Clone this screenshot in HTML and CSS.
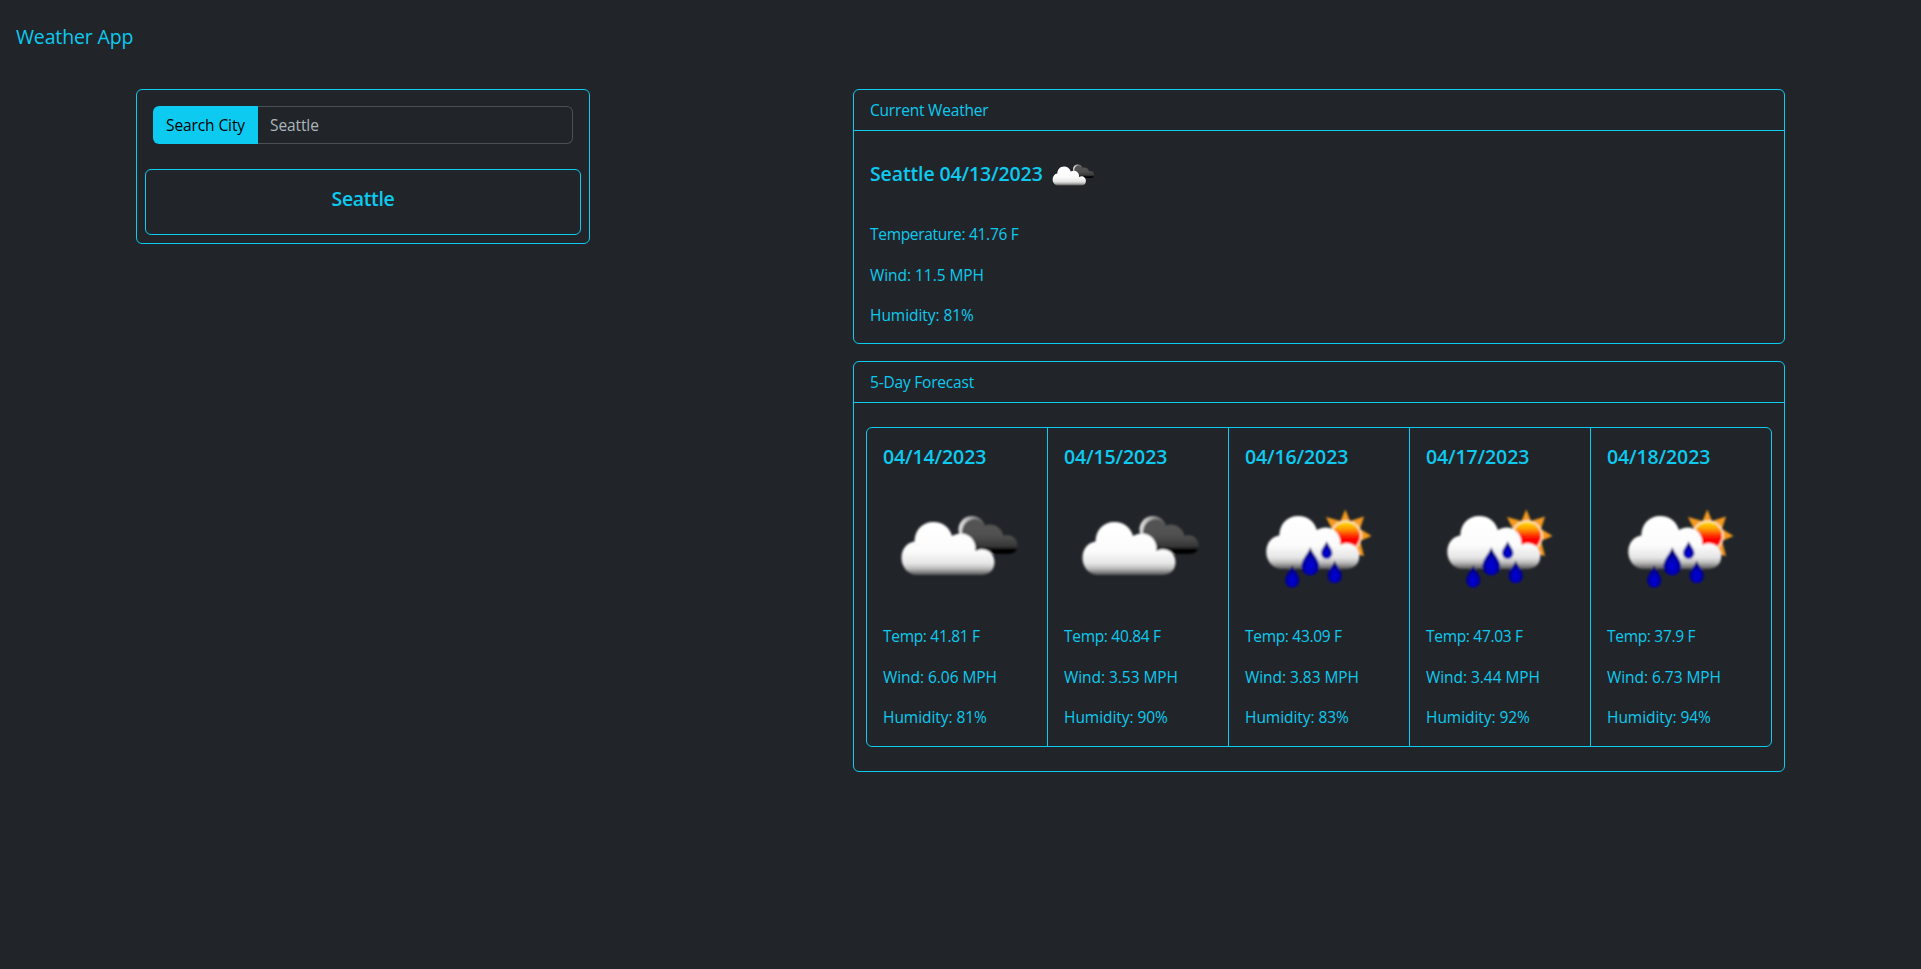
FILE: index.html
```html
<!DOCTYPE html>
<html lang="en">
<head>
<meta charset="utf-8">
<title>Weather App</title>
<link rel="stylesheet" href="styles.css">
</head>
<body>
<svg class="defs" width="0" height="0" aria-hidden="true">
  <defs>
    <linearGradient id="white" gradientUnits="userSpaceOnUse" x1="0" y1="32" x2="0" y2="85">
      <stop offset="0" stop-color="#fff"/><stop offset=".55" stop-color="#fcfcfc"/><stop offset=".78" stop-color="#e6e6e6"/><stop offset=".88" stop-color="#bbb"/><stop offset="1" stop-color="#555"/>
    </linearGradient>
    <linearGradient id="dark" gradientUnits="userSpaceOnUse" x1="0" y1="28" x2="0" y2="64">
      <stop offset="0" stop-color="#555"/><stop offset=".5" stop-color="#505050"/><stop offset=".78" stop-color="#383838"/><stop offset=".9" stop-color="#050505"/><stop offset="1" stop-color="#000"/>
    </linearGradient>
    <linearGradient id="rim" x1="0" y1="0" x2="1" y2=".25">
      <stop offset="0" stop-color="#fff"/><stop offset=".5" stop-color="#999"/><stop offset="1" stop-color="#555"/>
    </linearGradient>
    <linearGradient id="sun" x1="0" y1="0" x2="0" y2="1">
      <stop offset="0" stop-color="#ffe000"/><stop offset=".25" stop-color="#ff9d00"/><stop offset=".5" stop-color="#ff2a00"/><stop offset=".62" stop-color="#f00"/><stop offset="1" stop-color="#f00"/>
    </linearGradient>
    <radialGradient id="drop" cx=".5" cy=".68" r=".6">
      <stop offset="0" stop-color="#0000e0"/><stop offset=".5" stop-color="#0000b0"/><stop offset="1" stop-color="#00005c"/>
    </radialGradient>
    <filter id="soft" x="-10%" y="-10%" width="120%" height="120%"><feGaussianBlur stdDeviation=".8"/></filter>
    <path id="raindrop" d="M0 0C1 5 9 12 9 19.500A9 9 0 0 1-9 19.500C-9 12-1 5 0 0Z"/>
    <symbol id="clouds" viewBox="-2 0 148 110">
      <g filter="url(#soft)">
        <circle cx="87" cy="39.500" r="13.500" fill="url(#rim)"/>
        <path fill="url(#dark)" d="M77 62V43C77 34 83 29 90 29C94 29 97 32 99 36C107 32 117 37 118.500 46C126 43 132.500 49 132.500 55C132.500 61 129 64 123 64H80Z"/>
        <path fill="url(#white)" d="M32 85C23 85 16.500 77 16.500 68C16.500 59 22 52.500 29.500 51.500C30 40 37 32 48.500 32C58 32 65 38 67 46C78 39 92 47 90.500 61C99 56 109.500 62 109.500 72C109.500 80 104 85 96 85Z"/>
      </g>
    </symbol>
    <symbol id="rain" viewBox="25 10 148 110">
      <g filter="url(#soft)">
        <path fill="#f59a1b" d="M125.300 29.500L130 41L144 36.500L140 49L151.500 56L140 61L144 76L126 72L112 61V49L106 37L120.500 41Z"/>
        <circle cx="126" cy="56" r="15.800" fill="#ffe7c2"/>
        <circle cx="126" cy="56" r="14" fill="url(#sun)"/>
        <path fill="url(#white)" transform="translate(29.800 4)" d="M32 85C23 85 16.500 77 16.500 68C16.500 59 22 52.500 29.500 51.500C30 40 37 32 48.500 32C58 32 65 38 67 46C78 39 92 47 90.500 61C99 56 109.500 62 109.500 72C109.500 80 104 85 96 85Z"/>
        <g fill="url(#drop)">
          <use href="#raindrop" transform="translate(90.300 67)"/>
          <use href="#raindrop" transform="translate(72.200 85) scale(.8)"/>
          <use href="#raindrop" transform="translate(106.700 61) scale(.63)"/>
          <use href="#raindrop" transform="translate(114.700 80.500) scale(.8)"/>
        </g>
      </g>
    </symbol>
  </defs>
</svg>
<header class="navbar">Weather App</header>
<main class="layout">
  <section class="panel search">
    <div class="input-group">
      <button class="search-button" type="button">Search City</button>
      <div class="search-input">Seattle</div>
    </div>
    <div class="history"><h5 class="title city">Seattle</h5></div>
  </section>
  <div class="results">
    <section class="panel">
      <div class="panel-header">Current Weather</div>
      <div class="current">
        <div class="current-heading">
          <h5 class="title">Seattle 04/13/2023</h5>
          <svg class="icon-small"><use href="#clouds"/></svg>
        </div>
        <div class="stats">
          <p class="temp">Temperature: 41.76 F</p>
          <p>Wind: 11.5 MPH</p>
          <p>Humidity: 81%</p>
        </div>
      </div>
    </section>
    <section class="panel">
      <div class="panel-header">5-Day Forecast</div>
      <div class="forecast">
        <article class="day"><h5 class="title">04/14/2023</h5><svg class="icon"><use href="#clouds"/></svg>
          <div class="stats"><p class="temp">Temp: 41.81 F</p><p>Wind: 6.06 MPH</p><p>Humidity: 81%</p></div></article>
        <article class="day"><h5 class="title">04/15/2023</h5><svg class="icon"><use href="#clouds"/></svg>
          <div class="stats"><p class="temp">Temp: 40.84 F</p><p>Wind: 3.53 MPH</p><p>Humidity: 90%</p></div></article>
        <article class="day"><h5 class="title">04/16/2023</h5><svg class="icon"><use href="#rain"/></svg>
          <div class="stats"><p class="temp">Temp: 43.09 F</p><p>Wind: 3.83 MPH</p><p>Humidity: 83%</p></div></article>
        <article class="day"><h5 class="title">04/17/2023</h5><svg class="icon"><use href="#rain"/></svg>
          <div class="stats"><p class="temp">Temp: 47.03 F</p><p>Wind: 3.44 MPH</p><p>Humidity: 92%</p></div></article>
        <article class="day"><h5 class="title">04/18/2023</h5><svg class="icon"><use href="#rain"/></svg>
          <div class="stats"><p class="temp">Temp: 37.9 F</p><p>Wind: 6.73 MPH</p><p>Humidity: 94%</p></div></article>
      </div>
    </section>
  </div>
</main>
</body>
</html>
```

FILE: styles.css
```css
* { box-sizing: border-box; }

body {
  margin: 0;
  min-height: 100vh;
  background: #212529;
  color: #0dcaf0;
  font: 400 15.5px/24px "Open Sans", "Noto Sans", sans-serif;
  letter-spacing: -0.2px;
}

h5, p { margin: 0; }
.defs { display: block; height: 0; }

.navbar {
  padding: 22px 16px 37px;
  font-size: 19.5px;
  line-height: 30px;
  letter-spacing: -0.15px;
}

.layout {
  display: flex;
  align-items: flex-start;
  padding: 0 136px;
}

.panel {
  border: 1px solid #0dcaf0;
  border-radius: 6px;
}

.search {
  width: 454px;
  height: 155px;
  margin-right: 263px;
  padding: 16px 8px 8px;
}

.input-group {
  display: flex;
  height: 38px;
  margin: 0 8px 25px;
}

.search-button {
  width: 105px;
  padding: 0;
  border: 0;
  border-radius: 6px 0 0 6px;
  background: #0dcaf0;
  color: #000;
  font: inherit;
  letter-spacing: -0.1px;
}

.search-input {
  flex: 1;
  padding: 6px 12px;
  border: 1px solid #495057;
  border-left: 0;
  border-radius: 0 6px 6px 0;
  color: #adb5bd;
  letter-spacing: -0.1px;
}

.history {
  height: 66px;
  padding-top: 17px;
  border: 1px solid #0dcaf0;
  border-radius: 6px;
  text-align: center;
}

.title {
  font-size: 19.5px;
  font-weight: 600;
  line-height: 24px;
  letter-spacing: -0.12px;
  white-space: nowrap;
}

.city { letter-spacing: -0.35px; }

.results {
  display: flex;
  flex-direction: column;
  gap: 17px;
  width: 932px;
}

.panel-header {
  height: 41px;
  padding: 8px 16px;
  border-bottom: 1px solid #0dcaf0;
}

.current {
  height: 212px;
  padding: 24px 16px 16px;
}

.current-heading {
  display: flex;
  gap: 3px;
  height: 67px;
}

.current-heading .title { padding-top: 7px; }

.icon-small {
  width: 53px;
  height: 39.6px;
}

.stats {
  display: grid;
  row-gap: 16.5px;
  letter-spacing: -0.05px;
  white-space: nowrap;
}

.temp { letter-spacing: -0.3px; }

.forecast {
  display: grid;
  grid-template-columns: repeat(5, 181px);
  width: 906px;
  height: 320px;
  margin: 24px 12px;
  border: 1px solid #0dcaf0;
  border-radius: 6px;
}

.day {
  padding: 17px 16px 16px;
  border-right: 1px solid #0dcaf0;
}

.day:last-child { border-right: 0; }

.icon {
  display: block;
  width: 148px;
  height: 110px;
  margin: 21px 0 24px;
}
```
